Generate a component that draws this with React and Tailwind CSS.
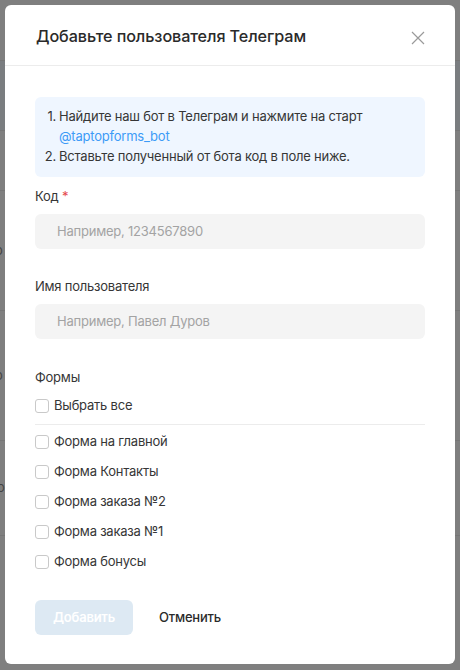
import React from "react";

const forms = ["Форма на главной", "Форма Контакты", "Форма заказа №2", "Форма заказа №1", "Форма бонусы"];

function Box() {
  return <span className="w-[14px] h-[14px] rounded-[3px] border border-[#c9c9c9] bg-white shrink-0" />;
}

export default function App() {
  return (
    <div className="relative w-[460px] h-[670px] overflow-hidden bg-[#7f7f7f]" style={{ fontFamily: "Inter, 'Noto Sans', sans-serif" }}>
      {/* faint page behind overlay */}
      <div className="absolute inset-0 flex flex-col text-[13px] text-[#444]">
        <div className="h-[60px]" />
        <div className="h-[70px] border-t border-[#767676] bg-[#7a7d80]" />
        <div className="h-[60px] border-t border-[#767676]" />
        <div className="h-[120px] border-t border-[#767676] flex items-center -ml-[5px]">о</div>
        <div className="h-[130px] border-t border-[#767676] flex items-center -ml-[5px]">о</div>
        <div className="h-[95px] border-t border-[#767676] flex items-center -ml-[3px]">ое</div>
        <div className="border-t border-[#767676]" />
      </div>

      <div className="absolute left-[5px] top-[5px] w-[450px] h-[659px] bg-white rounded-[6px] flex flex-col">
        <div className="h-[61px] border-b border-[#ececec] flex items-center justify-between pl-[31px] pr-[30px] pt-[2px]">
          <h1 className="text-[16.2px] font-medium text-[#2a2a2a] tracking-[-0.1px]">Добавьте пользователя Телеграм</h1>
          <svg width="14" height="14" viewBox="0 0 14 14" className="text-[#9a9a9a] mt-[3px]">
            <path d="M1 1L13 13M13 1L1 13" stroke="currentColor" strokeWidth="1.2" />
          </svg>
        </div>

        <div className="px-[30px] pt-[31px] flex flex-col text-[13px] tracking-[-0.22px] text-[#363636]">
          <div className="bg-[#eff6ff] rounded-[6px] pt-[9px] pb-[11px] pl-[8px] pr-[12px] leading-[20px] h-[80px]">
            <div className="flex gap-[3px]">
              <span className="w-[13px] shrink-0 text-right">1.</span>
              <div className="flex flex-col">
                <span>Найдите наш бот в Телеграм и нажмите на старт</span>
                <span className="text-[#3d9bf7]">@taptopforms_bot</span>
              </div>
            </div>
            <div className="flex gap-[3px]">
              <span className="w-[13px] shrink-0 text-right">2.</span>
              <span>Вставьте полученный от бота код в поле ниже.</span>
            </div>
          </div>

          <div className="mt-[9px] h-[20px] leading-[20px]">
            Код <span className="text-[#e5484d]">*</span>
          </div>
          <div className="mt-[8px] h-[35px] rounded-[6px] bg-[#f4f4f4] flex items-center pl-[22px] text-[#a3a3a3]">
            Например, 1234567890
          </div>

          <div className="mt-[27px] h-[20px] leading-[20px]">Имя пользователя</div>
          <div className="mt-[8px] h-[35px] rounded-[6px] bg-[#f4f4f4] flex items-center pl-[22px] text-[#a3a3a3]">
            Например, Павел Дуров
          </div>

          <div className="mt-[28px] h-[20px] leading-[20px]">Формы</div>
          <div className="mt-[9px] h-[20px] flex items-center gap-[5px]">
            <Box />
            <span>Выбрать все</span>
          </div>
          <div className="mt-[8px] border-t border-[#ececec]" />
          <div className="flex flex-col gap-[10px] mt-[7px]">
            {forms.map((f) => (
              <div key={f} className="h-[20px] flex items-center gap-[5px]">
                <Box />
                <span>{f}</span>
              </div>
            ))}
          </div>

          <div className="mt-[28px] flex items-center">
            <div className="w-[98px] h-[35px] rounded-[6px] bg-[#dde9f3] text-white font-semibold flex items-center justify-center text-[13px]">
              Добавить
            </div>
            <div className="ml-[26px] font-medium text-[#2a2a2a]">Отменить</div>
          </div>
        </div>
      </div>
    </div>
  );
}
